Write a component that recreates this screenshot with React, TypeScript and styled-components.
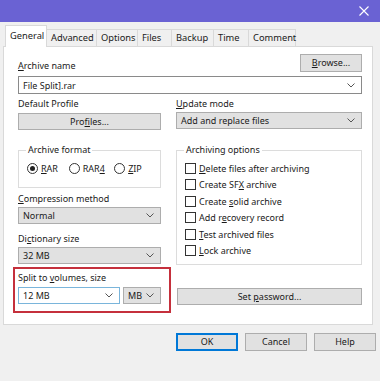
import React from 'react'
import styled, { createGlobalStyle } from 'styled-components'

const Global = createGlobalStyle`
  html, body { margin: 0; padding: 0; }
  body {
    width: 380px;
    height: 381px;
    overflow: hidden;
    background: #f0f0f0;
    font-family: 'Noto Sans', 'Open Sans', sans-serif;
    font-size: 9px;
    color: #1a1a1a;
  }
`

const Window = styled.div`
  width: 380px;
  height: 381px;
  display: flex;
  flex-direction: column;
  background: #f0f0f0;
`

const TitleBar = styled.div`
  height: 22px;
  background: #6a62d3;
  display: flex;
  justify-content: flex-end;
  align-items: center;
  padding-right: 11px;
`

const Tabs = styled.div`
  display: flex;
  align-items: flex-end;
  margin-top: 3px;
  padding-left: 5px;
  height: 22px;
  position: relative;
  z-index: 1;
`

const Tab = styled.div<{ active?: boolean; w: number }>`
  box-sizing: border-box;
  width: ${p => p.w}px;
  height: ${p => (p.active ? '22px' : '18px')};
  padding: ${p => (p.active ? '3px 4px 0' : '1px 4px 0')};
  background: ${p => (p.active ? '#fff' : '#f0f0f0')};
  border: 1px solid #d9d9d9;
  border-bottom: ${p => (p.active ? 'none' : '1px solid #d9d9d9')};
  margin-left: ${p => (p.active ? '0' : '-1px')};
  line-height: 14px;
  font-size: 9.3px;
  white-space: nowrap;
`

const Panel = styled.div`
  margin: -1px 7px 0 3px;
  background: #fff;
  border: 1px solid #d9d9d9;
  padding: 7px 10px 11px 14px;
  display: flex;
  flex-direction: column;
`

const TopRow = styled.div`
  display: flex;
  justify-content: space-between;
  align-items: flex-end;
`

const Label = styled.div<{ mt?: number; flush?: boolean }>`
  line-height: 12px;
  height: 12px;
  margin-top: ${p => p.mt ?? 0}px;
  margin-bottom: ${p => (p.flush ? 0 : 2)}px;
  white-space: nowrap;
`

const U = styled.span`
  text-decoration: underline;
  text-underline-offset: 1px;
`

const Button = styled.button<{ primary?: boolean; w?: number; h?: number; mt?: number }>`
  box-sizing: border-box;
  width: ${p => (p.w ? `${p.w}px` : 'auto')};
  height: ${p => p.h ?? 17}px;
  margin-top: ${p => p.mt ?? 0}px;
  background: #e1e1e1;
  border: 1px solid ${p => (p.primary ? '#0078d7' : '#adadad')};
  box-shadow: ${p => (p.primary ? 'inset 0 0 0 1px #0078d7' : 'none')};
  font: inherit;
  color: #1a1a1a;
  padding: 0;
  line-height: 14px;
  cursor: default;
`

const Field = styled.div<{ tone: 'white' | 'gray' | 'focus'; w?: number; h?: number }>`
  box-sizing: border-box;
  width: ${p => (p.w ? `${p.w}px` : 'auto')};
  height: ${p => p.h ?? 17}px;
  display: flex;
  align-items: center;
  justify-content: space-between;
  padding: 0 6px 0 4px;
  background: ${p => (p.tone === 'gray' ? '#e1e1e1' : '#fff')};
  border: 1px solid
    ${p => (p.tone === 'gray' ? '#adadad' : p.tone === 'focus' ? '#7ab5db' : '#8a8a8a')};
  white-space: nowrap;
`

const NameField = styled(Field)`
  margin-top: 4px;
`

const Columns = styled.div`
  display: flex;
  gap: 15px;
  margin-top: 4px;
`

const Column = styled.div<{ width: number }>`
  width: ${p => p.width}px;
  display: flex;
  flex-direction: column;
`

const Group = styled.fieldset<{ mt?: number }>`
  margin: ${p => p.mt ?? 14}px 0 0;
  padding: 0 8px;
  border: 1px solid #dcdcdc;
  min-width: 0;
  legend {
    padding: 0 2px;
    margin-left: -1px;
    line-height: 12px;
  }
`

const RadioRow = styled.div`
  display: flex;
  align-items: center;
  height: 12px;
  margin: 6px 0 13px;
`

const Radio = styled.span<{ on?: boolean }>`
  box-sizing: border-box;
  width: 11px;
  height: 11px;
  border-radius: 50%;
  border: 1px solid #333;
  display: inline-flex;
  align-items: center;
  justify-content: center;
  margin-right: 3px;
  &::after {
    content: '';
    width: 5px;
    height: 5px;
    border-radius: 50%;
    background: ${p => (p.on ? '#222' : 'transparent')};
  }
`

const RadioItem = styled.div<{ width: number }>`
  width: ${p => p.width}px;
  display: flex;
  align-items: center;
`

const CheckList = styled.div`
  padding: 4px 0 5px;
  display: flex;
  flex-direction: column;
`

const CheckRow = styled.div`
  height: 16.5px;
  display: flex;
  align-items: center;
  white-space: pre;
`

const Box = styled.span`
  box-sizing: border-box;
  width: 11px;
  height: 11px;
  border: 1px solid #333;
  background: #fff;
  margin-right: 3px;
  flex: none;
`

const Highlight = styled.div`
  margin: 3px -10px 0 -5px;
  border: 2px solid #c5303c;
  padding: 3px 8px 7px 3px;
  display: flex;
  flex-direction: column;
`

const SplitRow = styled.div`
  display: flex;
  gap: 3px;
  margin-top: 1px;
`

const PasswordButton = styled(Button)`
  margin-left: 1px;
`

const Footer = styled.div`
  display: flex;
  justify-content: flex-end;
  gap: 7px;
  margin-top: 8px;
  padding-right: 4px;
`

const Chevron = () => (
  <svg width="8" height="5" viewBox="0 0 8 5">
    <polyline points="0.5,0.5 4,4 7.5,0.5" fill="none" stroke="#555" strokeWidth="1" />
  </svg>
)

const Close = () => (
  <svg width="10" height="10" viewBox="0 0 10 10">
    <path d="M0.5 0.5 L9.5 9.5 M9.5 0.5 L0.5 9.5" stroke="#fff" strokeWidth="1.1" />
  </svg>
)

const tabs: [string, number][] = [
  ['General', 42],
  ['Advanced', 51],
  ['Options', 42],
  ['Files', 35],
  ['Backup', 43],
  ['Time', 36],
  ['Comment', 48],
]

const Check = ({ children }: { children: React.ReactNode }) => (
  <CheckRow>
    <Box />
    <span>{children}</span>
  </CheckRow>
)

export default function App() {
  return (
    <Window>
      <Global />
      <TitleBar>
        <Close />
      </TitleBar>
      <Tabs>
        {tabs.map(([t, w], i) => (
          <Tab key={t} active={i === 0} w={w}>
            {t}
          </Tab>
        ))}
      </Tabs>
      <Panel>
        <TopRow>
          <Label flush>
            <U>A</U>rchive name
          </Label>
          <Button w={62} h={18}>
            <U>B</U>rowse...
          </Button>
        </TopRow>
        <NameField tone="white" h={18}>
          <span>File Split].rar</span>
          <Chevron />
        </NameField>
        <Columns>
          <Column width={143}>
            <Label>Default Profile</Label>
            <Button mt={1}>
              Pro<U>fi</U>les...
            </Button>
            <Group>
              <legend>Archive format</legend>
              <RadioRow>
                <RadioItem width={44}>
                  <Radio on />
                  <span>
                    <U>R</U>AR
                  </span>
                </RadioItem>
                <RadioItem width={48}>
                  <Radio />
                  <span>
                    RAR<U>4</U>
                  </span>
                </RadioItem>
                <RadioItem width={40}>
                  <Radio />
                  <span>
                    <U>Z</U>IP
                  </span>
                </RadioItem>
              </RadioRow>
            </Group>
            <Label mt={5}>
              <U>C</U>ompression method
            </Label>
            <Field tone="gray">
              <span>Normal</span>
              <Chevron />
            </Field>
            <Label mt={9}>
              Di<U>c</U>tionary size
            </Label>
            <Field tone="gray">
              <span>32 MB</span>
              <Chevron />
            </Field>
            <Highlight>
              <Label>
                Split to <U>v</U>olumes, size
              </Label>
              <SplitRow>
                <Field tone="focus" w={102}>
                  <span>12 MB</span>
                  <Chevron />
                </Field>
                <Field tone="gray" w={38}>
                  <span>MB</span>
                  <Chevron />
                </Field>
              </SplitRow>
            </Highlight>
          </Column>
          <Column width={186}>
            <Label>
              <U>U</U>pdate mode
            </Label>
            <Field tone="gray">
              <span>Add and replace files</span>
              <Chevron />
            </Field>
            <Group mt={15}>
              <legend>Archiving options</legend>
              <CheckList>
                <Check>
                  <U>D</U>elete files after archiving
                </Check>
                <Check>
                  Create SF<U>X</U> archive
                </Check>
                <Check>
                  Create <U>s</U>olid archive
                </Check>
                <Check>
                  Add r<U>e</U>covery record
                </Check>
                <Check>
                  <U>T</U>est archived files
                </Check>
                <Check>
                  <U>L</U>ock archive
                </Check>
              </CheckList>
            </Group>
            <PasswordButton mt={23} w={185}>
              Set <U>p</U>assword...
            </PasswordButton>
          </Column>
        </Columns>
      </Panel>
      <Footer>
        <Button primary w={62} h={18}>
          OK
        </Button>
        <Button w={62} h={18}>
          Cancel
        </Button>
        <Button w={62} h={18}>
          Help
        </Button>
      </Footer>
    </Window>
  )
}
